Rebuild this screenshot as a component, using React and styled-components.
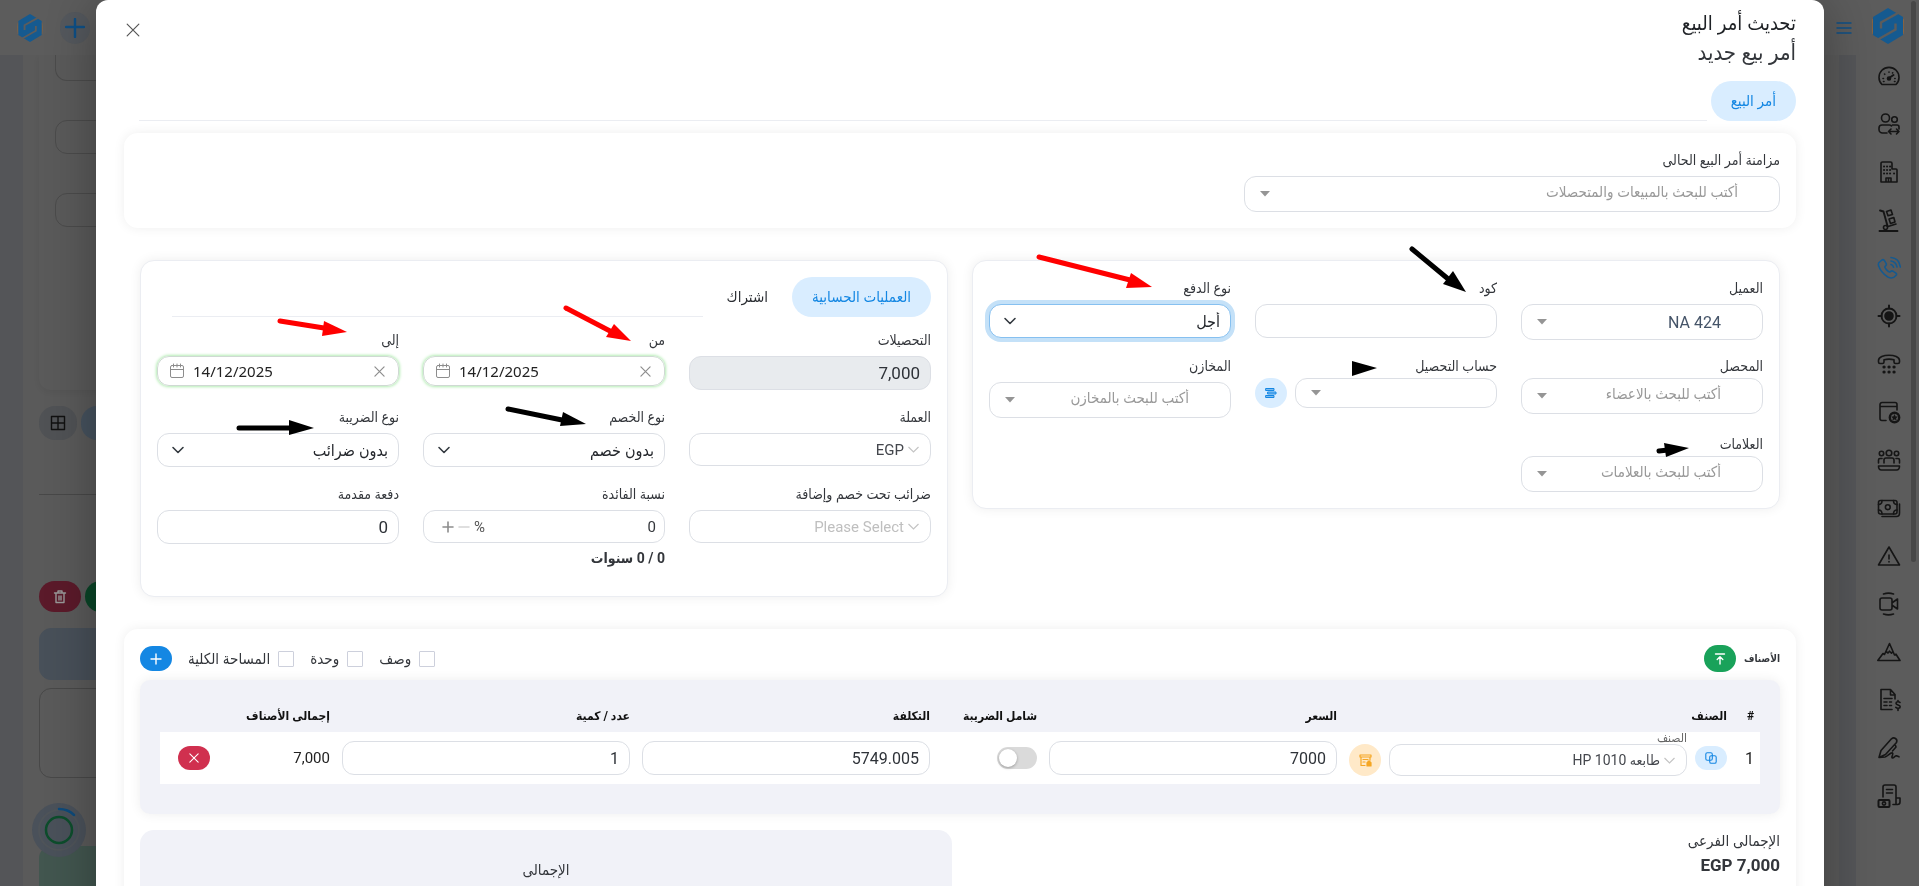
// src/App.jsx

import React, { useId, useState } from 'react';
import styled, { createGlobalStyle, css } from 'styled-components';

const GlobalStyle = createGlobalStyle`
  *, *::before, *::after {
    box-sizing: border-box;
  }
  body, html {
    margin: 0;
    padding: 0;
    overflow: hidden;
    background-color: #5b5b5b;
  }
  body, button, input, select {
    font-family: Roboto, 'DejaVu Sans Condensed', 'DejaVu Sans', sans-serif;
    color: #33363b;
  }
  button {
    border: 0;
    padding: 0;
    cursor: pointer;
  }
`;

// --- PAGE BEHIND THE MODAL ---

const Page = styled.div`
  display: flex;
  height: 100vh;
  overflow: hidden;
  background-color: #545558;
`;

const PageBody = styled.div`
  flex: 1;
  direction: ltr;
`;

const TopBar = styled.header`
  display: flex;
  align-items: center;
  justify-content: space-between;
  height: 55px;
  padding: 0 4px 0 16px;
  background-color: #5c5c5c;
`;

const TopBarGroup = styled.div`
  display: flex;
  align-items: center;
  gap: 16px;
`;

const RoundLogo = styled.a`
  display: flex;
  align-items: center;
  justify-content: center;
  width: 28px;
  height: 28px;
`;

const TopBarButton = styled.button`
  display: flex;
  align-items: center;
  justify-content: center;
  width: ${(p) => (p.$plain ? '16px' : '30px')};
  height: 32px;
  border-radius: 16px;
  background-color: ${(p) => (p.$plain ? 'transparent' : '#54585d')};
  color: #0e4f85;
`;

const Main = styled.main`
  height: calc(100vh - 55px);
  margin: 0 17px 0 23px;
  padding: 0 50% 0 16px;
  overflow: hidden;
  background-color: #5a5a5a;
`;

const BackCard = styled.section`
  height: 335px;
  padding-left: 16px;
  border-bottom-left-radius: 12px;
  box-shadow: 0 2px 6px rgba(0, 0, 0, 0.06);
`;

const BackInput = styled.div`
  height: 34px;
  margin-bottom: 39px;
  border: 1px solid #4b4b4b;
  border-radius: 12px;
  &:first-child {
    height: 26px;
    border-top: 0;
    border-radius: 0 0 12px 12px;
  }
`;

const BackRow = styled.div`
  display: flex;
  gap: 4px;
  padding: ${(p) => p.$pad};
  border-bottom: ${(p) => (p.$line ? '1px solid #484848' : '0')};
`;

const BackButton = styled.button`
  display: flex;
  align-items: center;
  justify-content: center;
  width: ${(p) => p.$width};
  height: ${(p) => p.$height};
  border-radius: 16px;
  background-color: ${(p) => p.$color};
  color: ${(p) => p.$ink || '#111'};
`;

const BackPanel = styled.div`
  height: ${(p) => p.$height};
  margin-bottom: 8px;
  border-radius: 12px;
  border: 1px solid ${(p) => p.$line};
  background-color: ${(p) => p.$color};
`;

const ProgressBubble = styled.div`
  position: fixed;
  left: 32px;
  top: 803px;
  width: 54px;
  height: 54px;
`;

const Sidebar = styled.nav`
  width: 63px;
  height: 100vh;
  padding-right: 8px;
  overflow: hidden;
  background-color: #5c5c5c;
`;

const SidebarLogo = styled.a`
  display: flex;
  align-items: center;
  justify-content: center;
  height: 52px;
  padding-left: 8px;
`;

const SidebarItem = styled.a`
  display: flex;
  align-items: center;
  justify-content: center;
  height: 48px;
  padding-left: 10px;
  color: ${(p) => (p.$active ? '#155a90' : '#151515')};
`;

const ScrollThumb = styled.div`
  position: fixed;
  right: 3px;
  top: 1px;
  width: 5px;
  height: 561px;
  border-radius: 3px;
  background-color: #474747;
`;

// --- MODAL ---

const Overlay = styled.div`
  position: fixed;
  inset: 0;
  overflow: hidden;
`;

const Modal = styled.div`
  min-height: 100%;
  margin: 0 95px 0 96px;
  padding: 8px 28px 0;
  border-radius: 12px 12px 0 0;
  background-color: #fff;
  box-shadow: 0 6px 50px rgba(0, 0, 0, 0.32);
`;

const ModalHeader = styled.header`
  display: flex;
  align-items: flex-start;
  justify-content: space-between;
  padding-bottom: 13px;
`;

const Title = styled.h1`
  margin: 0;
  font-size: ${(p) => (p.$strong ? '20px' : '22px')};
  line-height: 30px;
  font-weight: 400;
  color: ${(p) => (p.$strong ? '#1f2226' : '#33363b')};
`;

const CloseButton = styled.button`
  display: flex;
  margin: 15px 0 0 2px;
  background: none;
  color: #555;
`;

const Tabs = styled.div`
  display: flex;
  gap: 4px;
  margin-left: ${(p) => p.$inset};
`;

const Tab = styled.button`
  height: 40px;
  padding: 0 20px;
  border-radius: 20px;
  background-color: ${(p) => (p.$active ? '#d9edff' : 'transparent')};
  color: ${(p) => (p.$active ? '#1487e3' : '#2b2e33')};
  font-size: 15px;
`;

const TabLine = styled.div`
  flex: 1;
  border-bottom: 1px solid #ebedf2;
`;

const Card = styled.section`
  padding: 16px;
  border-radius: 14px;
  background-color: #fff;
  box-shadow: 0 0 12px rgba(0, 0, 0, 0.07);
`;

const SyncCard = styled(Card)`
  display: grid;
  grid-template-columns: repeat(3, 1fr);
  gap: 16px;
  margin-top: 12px;
`;

const CardsRow = styled.div`
  display: grid;
  grid-template-columns: 1fr 1fr;
  align-items: start;
  gap: 24px;
  padding: 32px 16px;
`;

const BorderedCard = styled(Card)`
  border: 1px solid #ebedf2;
  padding-bottom: ${(p) => (p.$tall ? '28px' : '16px')};
`;

const FieldGrid = styled.div`
  display: grid;
  grid-template-columns: repeat(3, 1fr);
  gap: ${(p) => (p.$afterTabs ? '16px 24px' : '15px 24px')};
  margin-top: ${(p) => (p.$afterTabs ? '12px' : '0')};
`;

const FieldBox = styled.div`
  display: flex;
  flex-direction: column;
  gap: ${(p) => (p.$tight ? '1px' : '5px')};
  min-width: 0;
`;

const Label = styled.label`
  font-size: 14px;
  line-height: 22px;
  color: #33363b;
`;

const outline = css`
  width: 100%;
  border: 1px solid #dcdfe5;
  border-radius: 12px;
  background-color: #fff;
  outline: none;
`;

const Input = styled.input`
  ${outline}
  height: 34px;
  padding: 0 10px;
  font-size: ${(p) => (p.$cell ? '16px' : '17px')};
  color: #2e3238;
  &:disabled {
    background-color: #e8ebee;
    opacity: 1;
  }
`;

const SelectWrap = styled.div`
  position: relative;
  display: flex;
  flex: ${(p) => (p.$grow ? '1' : 'none')};
  svg {
    position: absolute;
    top: 0;
    bottom: 0;
    ${(p) => (p.$iconRight ? 'right: 12px;' : 'left: 14px;')}
    margin: auto 0;
    pointer-events: none;
  }
`;

// kinds: search = autocomplete, native = plain drop-down, inline = chevron beside the text
const selectKinds = {
  search: css`
    height: 36px;
    padding: 0 41px 4px 36px;
    font-size: 15px;
    color: #999;
  `,
  picked: css`
    height: 36px;
    padding: 0 41px 0 36px;
    font-size: 16px;
    color: #455468;
  `,
  short: css`
    height: 30px;
    padding: 0 20px;
  `,
  native: css`
    height: 34px;
    padding: 0 10px 0 36px;
    font-size: 16px;
    color: #24272c;
  `,
  inline: css`
    height: 33px;
    padding: 0 26px 0 10px;
    font-size: 15px;
    color: #44474d;
  `,
  item: css`
    height: 32px;
    padding: 0 26px 0 10px;
    font-size: 14px;
    color: #44474d;
  `,
  empty: css`
    height: 33px;
    padding: 0 26px 0 10px;
    font-size: 15px;
    color: #bfbfbf;
  `,
};

const Select = styled.select`
  ${outline}
  appearance: none;
  ${(p) => selectKinds[p.$kind]}
  ${(p) =>
    p.$focused &&
    css`
      border-color: #86c0f0;
      box-shadow: 0 0 0 4px #c4e1f8;
    `}
`;

const DateBox = styled.div`
  display: flex;
  align-items: center;
  direction: ltr;
  gap: 8px;
  height: 30px;
  padding: 0 13px 0 11px;
  border: 1px solid #cfd9d3;
  border-radius: 12px;
  box-shadow: 0 0 3px 1px #b4ecb4;
  color: #8d8d8d;
`;

const DateInput = styled.input`
  flex: 1;
  min-width: 0;
  padding: 0;
  border: 0;
  outline: none;
  background: none;
  font-family: 'Noto Sans', sans-serif;
  font-size: 15px;
  color: #222;
`;

const IconButton = styled.button`
  display: flex;
  background: none;
  color: ${(p) => p.$color || '#8d8d8d'};
`;

const StepBox = styled.div`
  ${outline}
  display: flex;
  align-items: center;
  gap: 4px;
  height: 33px;
  padding: 0 8px 0 18px;
`;

const StepInput = styled.input`
  flex: 1;
  min-width: 0;
  padding: 0;
  border: 0;
  outline: none;
  font-size: 15px;
`;

const Unit = styled.span`
  font-size: 15px;
  color: #555;
`;

const Years = styled.strong`
  font-size: 14px;
  line-height: 20px;
`;

const WithButton = styled.div`
  display: flex;
  gap: 8px;
`;

const PillButton = styled.button`
  display: flex;
  flex: none;
  align-items: center;
  justify-content: center;
  width: 32px;
  height: ${(p) => p.$height};
  border-radius: 16px;
  background-color: ${(p) => p.$color};
  color: ${(p) => p.$ink || '#fff'};
`;

// --- ITEMS ---

const ItemsBar = styled.div`
  display: flex;
  align-items: center;
  justify-content: space-between;
  height: 27px;
  margin-bottom: 8px;
`;

const ItemsTitle = styled.h2`
  display: flex;
  align-items: center;
  gap: 8px;
  margin: 0;
  font-size: 10px;
  font-weight: 700;
`;

const ItemsOptions = styled.div`
  display: flex;
  align-items: center;
  gap: 16px;
`;

const CheckLabel = styled.label`
  display: flex;
  align-items: center;
  gap: 8px;
  font-size: 15px;
`;

const Checkbox = styled.input`
  appearance: none;
  width: 16px;
  height: 16px;
  margin: 0;
  border: 1px solid #cdd0dc;
  border-radius: 1px;
`;

const TablePanel = styled.div`
  padding: 20px 20px 30px;
  border-radius: 10px;
  background-color: #f1f2f8;
  box-shadow: 0 0 12px rgba(0, 0, 0, 0.07);
`;

const Table = styled.table`
  width: 100%;
  table-layout: fixed;
  border-collapse: collapse;
`;

const Th = styled.th`
  width: ${(p) => p.$width || 'auto'};
  height: 32px;
  padding: 0 6px;
  font-size: 12px;
  font-weight: 700;
  text-align: right;
  white-space: nowrap;
  color: #111;
`;

const Td = styled.td`
  height: 52px;
  padding: 0 6px;
  background-color: #fff;
  font-size: ${(p) => (p.$total ? '15px' : '16px')};
  vertical-align: ${(p) => (p.$bottom ? 'bottom' : 'middle')};
  color: #222;
`;

const ItemCell = styled.div`
  display: flex;
  align-items: flex-end;
  gap: 8px;
  padding-bottom: 8px;
`;

const ItemField = styled.div`
  display: flex;
  flex: 1;
  flex-direction: column;
`;

const ItemLabel = styled.label`
  font-size: 12px;
  line-height: 12px;
  color: #666;
`;

const CopySlot = styled.div`
  padding-bottom: 6px;
`;

const Switch = styled.input`
  display: block;
  appearance: none;
  direction: ltr;
  width: 40px;
  height: 22px;
  margin: 0;
  padding: 2px;
  border-radius: 11px;
  background-color: #dadada;
  &::before {
    content: '';
    display: block;
    width: 18px;
    height: 18px;
    border-radius: 50%;
    background-color: #fff;
    box-shadow: 0 1px 3px rgba(0, 0, 0, 0.3);
  }
`;

const Summary = styled.div`
  display: grid;
  grid-template-columns: 1fr 1fr;
  gap: 16px;
  margin-top: 16px;
`;

const Subtotal = styled.p`
  margin: 0;
  font-size: 15px;
  line-height: 22px;
  strong {
    display: block;
    font-size: 17px;
    line-height: 26px;
  }
`;

const TotalPanel = styled.div`
  height: 160px;
  padding-top: 29px;
  border-radius: 14px;
  background-color: #f1f2f8;
  font-size: 15px;
  line-height: 22px;
  text-align: center;
`;

const Arrows = styled.svg`
  position: fixed;
  left: 0;
  top: 0;
  pointer-events: none;
`;

// --- ICONS ---

const Icon = ({ size = 16, box = 24, width = 1.6, children }) => (
  <svg
    width={size}
    height={size}
    viewBox={`0 0 ${box} ${box}`}
    fill="none"
    stroke="currentColor"
    strokeWidth={width}
    strokeLinecap="round"
    strokeLinejoin="round"
    aria-hidden="true"
  >
    {children}
  </svg>
);

const Caret = () => (
  <svg width="14" height="6" viewBox="0 0 14 6" aria-hidden="true">
    <path d="M2 0h10L7 5.5z" fill="#959595" />
  </svg>
);

const Chevron = () => (
  <svg width="14" height="8" viewBox="0 0 14 8" fill="none" aria-hidden="true">
    <path d="M2 1.5l5 5 5-5" stroke="#343a40" strokeWidth="1.6" strokeLinecap="round" strokeLinejoin="round" />
  </svg>
);

const ThinChevron = () => (
  <svg width="11" height="7" viewBox="0 0 11 7" fill="none" aria-hidden="true">
    <path d="M0.5 1l5 5 5-5" stroke="#c4c4c4" strokeWidth="1.2" />
  </svg>
);

const CrossIcon = ({ size = 11, width = 1.3 }) => (
  <Icon size={size} box={12} width={width}>
    <path d="M1 1l10 10M11 1L1 11" />
  </Icon>
);

const Logo = ({ width, height, cut }) => (
  <svg width={width} height={height} viewBox="0 0 32 36" aria-hidden="true">
    <path d="M1 11C0 15 0 21 1 26M31 11c1 4 1 10 0 15" fill="none" stroke="#8a6440" strokeWidth="1.2" />
    <path d="M16 0l15 9v18l-15 9-15-9V9z" fill="#155a90" />
    <path d="M26 5L9 14.500v6M23.500 15.500v6L6 31.500" fill="none" stroke={cut} strokeWidth="2.4" />
  </svg>
);

const sidebarIcons = [
  {
    name: 'لوحة التحكم',
    art: (
      <>
        <path d="M5 20.5a10 10 0 1 1 14 0z" />
        <path d="M12 14l4.500-3" strokeWidth="2" />
        <circle cx="12" cy="14.500" r="1.500" fill="currentColor" />
        <path d="M6 14.500h.5M7.500 10l.3.3M12 8v.2M17.800 14.500h.3M15.500 9l.2-.2M6.500 17.500h.5M17.500 17.500h.5" />
      </>
    ),
  },
  {
    name: 'العملاء',
    art: (
      <>
        <circle cx="8.5" cy="6" r="4" />
        <circle cx="17.5" cy="7.5" r="2.8" />
        <path d="M10 21H5.500A3.500 3.500 0 0 1 2 17.500V16a3 3 0 0 1 3-3h7.500c1 0 1.500.5 2 1M15.500 13H20a2 2 0 0 1 2 2v2M11.500 19.500h10M14 17l-2.500 2.500L14 22M19.500 17l2.500 2.500-2.500 2.500" />
      </>
    ),
  },
  {
    name: 'الشركات',
    art: (
      <>
        <path d="M4 22V3.500A1.500 1.500 0 0 1 5.500 2h8A1.500 1.500 0 0 1 15 3.500V9h4a1 1 0 0 1 1 1v12zM9 22v-4h5v4M11.500 18v4" />
        <path d="M7 6.500h.1M10 6.500h.1M13 6.500h.1M7 10h.1M10 10h.1M13 10h.1M7 13.500h.1M10 13.500h.1M13 13.500h.1M17 13.500h.1" strokeWidth="2" />
      </>
    ),
  },
  {
    name: 'المخزن',
    art: (
      <>
        <path d="M3 2.500l3.500 1L10.500 18M2.500 23h18" strokeWidth="1.9" />
        <circle cx="8.5" cy="19.5" r="2" />
        <path d="M11 18.500l8-2.500M9.500 3.500l4.500-1.500 1.500 4.500-4.500 1.300zM12 11l4.800-1.500 1.200 4.500-4.500 1.500z" />
      </>
    ),
  },
  {
    name: 'المكالمات',
    active: true,
    art: (
      <>
        <path d="M2 6.500L5 4c1-.7 1.600-.5 2.300.4l1.800 3c.5 1 .4 1.500-.3 2.200-1.500 1.300-1.300 1.700.5 4 2 2.200 2.800 3 4 2.200.8-.8 1.600-1.200 2.600-.6l3 2c1 .8.800 1.500 0 2.300-2.500 3-4.500 3.500-8 1.500C6 18 3 14 1.500 9.500c-.2-1.300-.2-2.300.5-3z" />
        <path d="M14 8.500c1.500.4 2.300 1.300 2.600 2.800M14 5c3.300.5 5.300 2.500 6 6M14 1.500c5.500.5 8.700 4 9.300 9.500" />
      </>
    ),
  },
  {
    name: 'الأهداف',
    art: (
      <>
        <circle cx="12" cy="12" r="7.5" strokeWidth="1.9" />
        <circle cx="12" cy="12" r="4" fill="currentColor" />
        <path d="M12 1.500v3M12 19.500v3M1.500 12h3M19.500 12h3" strokeWidth="2" />
      </>
    ),
  },
  {
    name: 'الهاتف',
    art: (
      <>
        <path d="M1.500 8.500c0-7 21-7 21 0v1.500c0 1-.5 1.500-1.500 1.500h-2.500c-1 0-1.500-.5-1.500-1.500V7.800c-3-.8-7-.8-10 0V10c0 1-.5 1.500-1.500 1.500H3c-1 0-1.500-.5-1.500-1.500z" />
        <path d="M7 15h.1M12 15h.1M17 15h.1M7 20h.1M12 20h.1M17 20h.1" strokeWidth="3.2" />
      </>
    ),
  },
  {
    name: 'المميزة',
    art: (
      <>
        <path d="M9 20.500H5A2 2 0 0 1 3 18.500V4.500a2 2 0 0 1 2-2h13a2 2 0 0 1 2 2V10M3 6.500h17" />
        <circle cx="17.5" cy="17.5" r="4.7" strokeWidth="2.4" />
        <path d="M17.500 14.500l1 2 2 .2-1.500 1.500.4 2.100-1.900-1-1.900 1 .4-2.100-1.500-1.500 2-.2z" fill="currentColor" strokeWidth="0.3" />
      </>
    ),
  },
  {
    name: 'الاجتماعات',
    art: (
      <>
        <circle cx="12" cy="5" r="2.8" />
        <circle cx="4.5" cy="5.5" r="2.2" />
        <circle cx="19.5" cy="5.5" r="2.2" />
        <path d="M7 15v-3c0-1.500.8-2 2-2h6c1.200 0 2 .5 2 2v3M1.500 15v-3c0-1 .7-1.500 1.500-1.500h2M22.500 15v-3c0-1-.7-1.500-1.500-1.500h-2M1.500 18h21c0 2.500-1 4-3 4h-15c-2 0-3-1.500-3-4z" />
      </>
    ),
  },
  {
    name: 'النقدية',
    art: (
      <>
        <rect x="1.5" y="4.5" width="18.5" height="13.5" rx="2" />
        <circle cx="10.8" cy="11.2" r="2.4" />
        <path d="M22.500 8v9c0 2-1 3.500-3 3.500H5M1.500 8.500c2 0 3.500-1.500 3.500-4M20 8.500c-2 0-3.500-1.500-3.500-4M1.500 14c2 0 3.500 1.500 3.500 4M20 14c-2 0-3.500 1.500-3.500 4" />
      </>
    ),
  },
  { name: 'التنبيهات', art: <path d="M12 3L22.500 21h-21zM12 11v4M12 17.500v.5" /> },
  {
    name: 'الفيديو',
    art: (
      <path d="M5 6h8a2 2 0 0 1 2 2v8a2 2 0 0 1-2 2H5a2 2 0 0 1-2-2V8a2 2 0 0 1 2-2zM15.500 10.500L20.500 7v10l-5-3.500M6.500 2c3-1 7-1 10 0M6.500 22c3 1 7 1 10 0" />
    ),
  },
  { name: 'القمة', art: <path d="M.8 20.500L6 13.500l1.500 1L12.500 3.500l5 11.500 1.500-.8 4 6.300zM9 11.500l2 1.500 1.500-1.800 2 2 1.300-1.700" /> },
  {
    name: 'الفواتير',
    art: (
      <path d="M15 21.500H4v-20h9.500l4.500 5V11M13.500 1.500V7H18M7 10.500h8M7 14h3M12.500 14h2M7 17.500h3M12.500 17.500h2M23 14.500c-1-1.200-4-1-4 .8 0 2 4.200 1.200 4.200 3.400 0 2-3.400 2-4.400.6M21 12.500v1M21 21v1.500" />
    ),
  },
  {
    name: 'التوقيع',
    art: (
      <path d="M2 21.500l2-7L14.500 2.800c2.500-2 6.500 0 5 3.700L8.500 18.500zM18.500 9.500l.5 1.500-3.500 4M2 21.500l6-.5c2.500-.5 5.500-5 7.500-4 1.500 1-2 4.500 0 5 1.500 0 2.500-2.500 4-2.200l2.500 1" />
    ),
  },
  {
    name: 'المدفوعات',
    art: (
      <>
        <path d="M6 13V3a2 2 0 0 1 2-2h9a2 2 0 0 1 2 2v11M9.500 5.500h6M9.500 9h6M19 14h4v4c0 1.500-1 2.500-2.500 2.500H16M19 14v6" />
        <rect x="1.5" y="16" width="11" height="7" rx="1" strokeWidth="2" />
        <circle cx="7" cy="19.500" r="1.6" />
      </>
    ),
  },
];

// --- FIELDS ---

const Field = ({ label, tight, children, after }) => {
  const id = useId();
  return (
    <FieldBox $tight={tight}>
      <Label htmlFor={id}>{label}</Label>
      {children(id)}
      {after}
    </FieldBox>
  );
};

const SelectField = ({ label, tight, kind, value, focused }) => (
  <Field label={label} tight={tight}>
    {(id) => (
      <SelectWrap $iconRight={kind === 'inline' || kind === 'empty'}>
        <Select id={id} $kind={kind} $focused={focused}>
          <option>{value}</option>
        </Select>
        {kind === 'native' && <Chevron />}
        {(kind === 'inline' || kind === 'empty') && <ThinChevron />}
        {(kind === 'search' || kind === 'picked') && <Caret />}
      </SelectWrap>
    )}
  </Field>
);

const DateField = ({ label }) => (
  <Field label={label}>
    {(id) => (
      <DateBox>
        <Icon size={16} box={16} width={1}>
          <path d="M3 2.500h10a1.500 1.500 0 0 1 1.500 1.500v9a1.500 1.500 0 0 1-1.500 1.500H3A1.500 1.500 0 0 1 1.500 13V4A1.500 1.500 0 0 1 3 2.500zM1.500 6.500h13M4.500 1v3M8 1v3M11.500 1v3" />
        </Icon>
        <DateInput id={id} defaultValue="14/12/2025" />
        <IconButton aria-label="مسح">
          <CrossIcon />
        </IconButton>
      </DateBox>
    )}
  </Field>
);

const OrderFields = () => (
  <BorderedCard>
    <FieldGrid>
      <SelectField label="العميل" kind="picked" value="NA 424" />
      <Field label="كود">{(id) => <Input id={id} />}</Field>
      <SelectField label="نوع الدفع" kind="native" value="أجل" focused />
      <SelectField label="المحصل" kind="search" value="أكتب للبحث بالاعضاء" tight />
      <Field label="حساب التحصيل" tight>
        {(id) => (
          <WithButton>
            <SelectWrap $grow>
              <Select id={id} $kind="short" />
              <Caret />
            </SelectWrap>
            <PillButton $height="30px" $color="#d9edff" $ink="#1487e3" aria-label="الحسابات">
              <Icon size={12} box={12} width={1}>
                <path d="M1 1.500h8v2H1zM3 5h8v2H3zM1 8.500h8v2H1z" fill="#7cbcf2" />
              </Icon>
            </PillButton>
          </WithButton>
        )}
      </Field>
      <SelectField label="المخازن" kind="search" value="أكتب للبحث بالمخازن" />
      <SelectField label="العلامات" kind="search" value="أكتب للبحث بالعلامات" tight />
    </FieldGrid>
  </BorderedCard>
);

const AccountFields = () => {
  const [tab, setTab] = useState(0);
  return (
    <BorderedCard $tall>
      <Tabs $inset="15px">
        {['العمليات الحسابية', 'اشتراك'].map((name, i) => (
          <Tab key={name} $active={tab === i} onClick={() => setTab(i)}>
            {name}
          </Tab>
        ))}
        <TabLine />
      </Tabs>
      <FieldGrid $afterTabs>
        <Field label="التحصيلات">{(id) => <Input id={id} defaultValue="7,000" disabled />}</Field>
        <DateField label="من" />
        <DateField label="إلى" />
        <SelectField label="العملة" kind="inline" value="EGP" />
        <SelectField label="نوع الخصم" kind="native" value="بدون خصم" />
        <SelectField label="نوع الضريبة" kind="native" value="بدون ضرائب" />
        <SelectField label="ضرائب تحت خصم وإضافة" kind="empty" value="Please Select" />
        <Field label="نسبة الفائدة" after={<Years>0 / 0 سنوات</Years>}>
          {(id) => (
            <StepBox>
              <StepInput id={id} defaultValue="0" />
              <Unit>%</Unit>
              <IconButton $color="#d5d5d5" aria-label="إنقاص">
                <Icon size={12} box={12}>
                  <path d="M1 6h10" />
                </Icon>
              </IconButton>
              <IconButton aria-label="زيادة">
                <Icon size={12} box={12}>
                  <path d="M1 6h10M6 1v10" />
                </Icon>
              </IconButton>
            </StepBox>
          )}
        </Field>
        <Field label="دفعة مقدمة">{(id) => <Input id={id} defaultValue="0" />}</Field>
      </FieldGrid>
    </BorderedCard>
  );
};

const ItemsTable = () => (
  <TablePanel>
    <Table>
      <thead>
        <tr>
          <Th $width="27px">#</Th>
          <Th>الصنف</Th>
          <Th $width="18.75%">السعر</Th>
          <Th $width="107px">شامل الضريبة</Th>
          <Th $width="18.75%">التكلفة</Th>
          <Th $width="18.75%">عدد / كمية</Th>
          <Th $width="120px">إجمالى الأصناف</Th>
          <Th $width="56px" aria-label="حذف" />
        </tr>
      </thead>
      <tbody>
        <tr>
          <Td>1</Td>
          <Td $bottom>
            <ItemCell>
              <CopySlot>
                <PillButton $height="24px" $color="#d9edff" $ink="#1487e3" aria-label="نسخ">
                  <Icon size={12} box={12} width={1.1}>
                    <rect x="0.8" y="0.8" width="6.5" height="7.5" rx="1.5" />
                    <rect x="4.7" y="3.8" width="6.5" height="7.5" rx="1.5" />
                  </Icon>
                </PillButton>
              </CopySlot>
              <ItemField>
                <ItemLabel htmlFor="item">الصنف</ItemLabel>
                <SelectWrap $iconRight>
                  <Select id="item" $kind="item">
                    <option>طابعه HP 1010</option>
                  </Select>
                  <ThinChevron />
                </SelectWrap>
              </ItemField>
              <PillButton $height="32px" $color="#ffe9c8" $ink="#f5a623" aria-label="المخزون">
                <Icon size={13} box={13} width={1.2}>
                  <path d="M1 1h11v2H1zM2 3v8.500h4M11 3v3M4 5.500h5M4 8h2" />
                  <path d="M8 8.500h4v3.500H8zM9 8.500V7h2v1.500" fill="#f5a623" />
                </Icon>
              </PillButton>
            </ItemCell>
          </Td>
          <Td>
            <Input $cell aria-label="السعر" defaultValue="7000" />
          </Td>
          <Td>
            <Switch type="checkbox" aria-label="شامل الضريبة" />
          </Td>
          <Td>
            <Input $cell aria-label="التكلفة" defaultValue="5749.005" />
          </Td>
          <Td>
            <Input $cell aria-label="عدد / كمية" defaultValue="1" />
          </Td>
          <Td $total>7,000</Td>
          <Td>
            <PillButton $height="24px" $color="#d0304f" aria-label="حذف">
              <CrossIcon size={10} />
            </PillButton>
          </Td>
        </tr>
      </tbody>
    </Table>
  </TablePanel>
);

const Items = () => (
  <Card>
    <ItemsBar>
      <ItemsTitle>
        الأصناف
        <PillButton $height="27px" $color="#19a25a" aria-label="رفع">
          <Icon size={12} box={12} width={1.4}>
            <path d="M1.500 1h9M6 11V4M3.200 6.500L6 3.800l2.800 2.700" />
          </Icon>
        </PillButton>
      </ItemsTitle>
      <ItemsOptions>
        {['وصف', 'وحدة', 'المساحة الكلية'].map((name) => (
          <CheckLabel key={name}>
            <Checkbox type="checkbox" />
            {name}
          </CheckLabel>
        ))}
        <PillButton $height="25px" $color="#1487e3" aria-label="إضافة">
          <Icon size={12} box={12} width={1.4}>
            <path d="M1 6h10M6 1v10" />
          </Icon>
        </PillButton>
      </ItemsOptions>
    </ItemsBar>
    <ItemsTable />
    <Summary>
      <Subtotal>
        الإجمالى الفرعى
        <strong>EGP 7,000</strong>
      </Subtotal>
      <TotalPanel>الإجمالى</TotalPanel>
    </Summary>
  </Card>
);

const arrows = [
  { color: '#f00', line: 'M1039 257L1130 280', head: '1131,273 1152,287 1126,288' },
  { color: '#000', line: 'M1412 249L1447 278', head: '1453,271 1466,292 1443,284' },
  { color: '#000', head: '1352,361 1377,368 1352,376' },
  { color: '#000', line: 'M1659 451L1668 450', head: '1664,443 1689,448 1666,457' },
  { color: '#f00', line: 'M280 321L324 328', head: '324,321 347,332 322,336' },
  { color: '#f00', line: 'M566 308L610 331', head: '614,324 631,341 606,337' },
  { color: '#000', line: 'M508 409L562 420', head: '563,412 586,424 560,426' },
  { color: '#000', line: 'M239 428L290 428', head: '289,420 314,428 289,435' },
];

const App = () => {
  return (
    <div dir="rtl">
      <GlobalStyle />
      <Page>
        <Sidebar>
          <SidebarLogo href="#" aria-label="الرئيسية">
            <Logo width={32} height={36} cut="#5c5c5c" />
          </SidebarLogo>
          {sidebarIcons.map((item) => (
            <SidebarItem key={item.name} href="#" aria-label={item.name} $active={item.active}>
              <Icon size={24}>{item.art}</Icon>
            </SidebarItem>
          ))}
        </Sidebar>
        <PageBody>
          <TopBar>
            <TopBarGroup>
              <RoundLogo href="#" aria-label="الحساب">
                <Logo width={28} height={28} cut="#5c5c5c" />
              </RoundLogo>
              <TopBarButton aria-label="جديد">
                <Icon size={20} box={20} width={2.4}>
                  <path d="M1 9h18M10 1v18" />
                </Icon>
              </TopBarButton>
            </TopBarGroup>
            <TopBarButton $plain aria-label="القائمة">
              <Icon size={16} box={16} width={1.4}>
                <path d="M1 3h14M1 8h14M1 13h14" />
              </Icon>
            </TopBarButton>
          </TopBar>
          <Main>
            <BackCard>
              <BackInput />
              <BackInput />
              <BackInput />
            </BackCard>
            <BackRow $pad="16px 0 54px" $line>
              <BackButton $width="38px" $height="34px" $color="#505255">
                <Icon size={16} box={16} width={1.4}>
                  <path d="M1.500 1.500h13v13h-13zM8 1.500v13M1.500 8h13" />
                </Icon>
              </BackButton>
              <BackButton $width="42px" $height="34px" $color="#46525e" />
            </BackRow>
            <BackRow $pad="86px 0 16px">
              <BackButton $width="42px" $height="31px" $color="#5b1a2a" $ink="#999">
                <Icon size={14} box={14} width={1.4}>
                  <path d="M1.500 3h11M5 3V1h4v2M3 3v9.500h8V3M6 6v4M8 6v4" />
                </Icon>
              </BackButton>
              <BackButton $width="42px" $height="31px" $color="#0a4527" />
            </BackRow>
            <BackPanel $height="52px" $color="#485059" $line="#485059" />
            <BackPanel $height="90px" $color="transparent" $line="#484848" />
            <BackPanel $height="52px" $color="transparent" $line="transparent" />
            <BackPanel $height="90px" $color="#42564f" $line="#42564f" />
          </Main>
        </PageBody>
      </Page>
      <ProgressBubble>
        <svg width="54" height="54" viewBox="0 0 54 54" aria-hidden="true">
          <circle cx="27" cy="27" r="27" fill="#4a515a" />
          <circle cx="27" cy="27" r="20" fill="none" stroke="#4f5459" strokeWidth="2" />
          <circle cx="27" cy="27" r="13" fill="none" stroke="#0d4d2c" strokeWidth="2.5" />
          <path d="M27 6c6 0 11 2 15 6" fill="none" stroke="#0e4a7a" strokeWidth="2.5" strokeLinecap="round" />
        </svg>
      </ProgressBubble>
      <ScrollThumb />

      <Overlay>
        <Modal role="dialog" aria-label="تحديث أمر البيع">
          <ModalHeader>
            <div>
              <Title $strong>تحديث أمر البيع</Title>
              <Title as="h2">أمر بيع جديد</Title>
            </div>
            <CloseButton aria-label="إغلاق">
              <CrossIcon size={14} width={1} />
            </CloseButton>
          </ModalHeader>
          <Tabs $inset="15px">
            <Tab $active>أمر البيع</Tab>
            <TabLine />
          </Tabs>
          <SyncCard>
            <SelectField label="مزامنة أمر البيع الحالى" kind="search" value="أكتب للبحث بالمبيعات والمتحصلات" />
          </SyncCard>
          <CardsRow>
            <OrderFields />
            <AccountFields />
          </CardsRow>
          <Items />
        </Modal>
      </Overlay>

      {/* hand-drawn markers over the form */}
      <Arrows width="1919" height="886" viewBox="0 0 1919 886" aria-hidden="true">
        {arrows.map((arrow) => (
          <g key={arrow.head} fill={arrow.color} stroke={arrow.color}>
            {arrow.line && <path d={arrow.line} strokeWidth="5" strokeLinecap="round" />}
            <polygon points={arrow.head} stroke="none" />
          </g>
        ))}
      </Arrows>
    </div>
  );
};

export default App;
